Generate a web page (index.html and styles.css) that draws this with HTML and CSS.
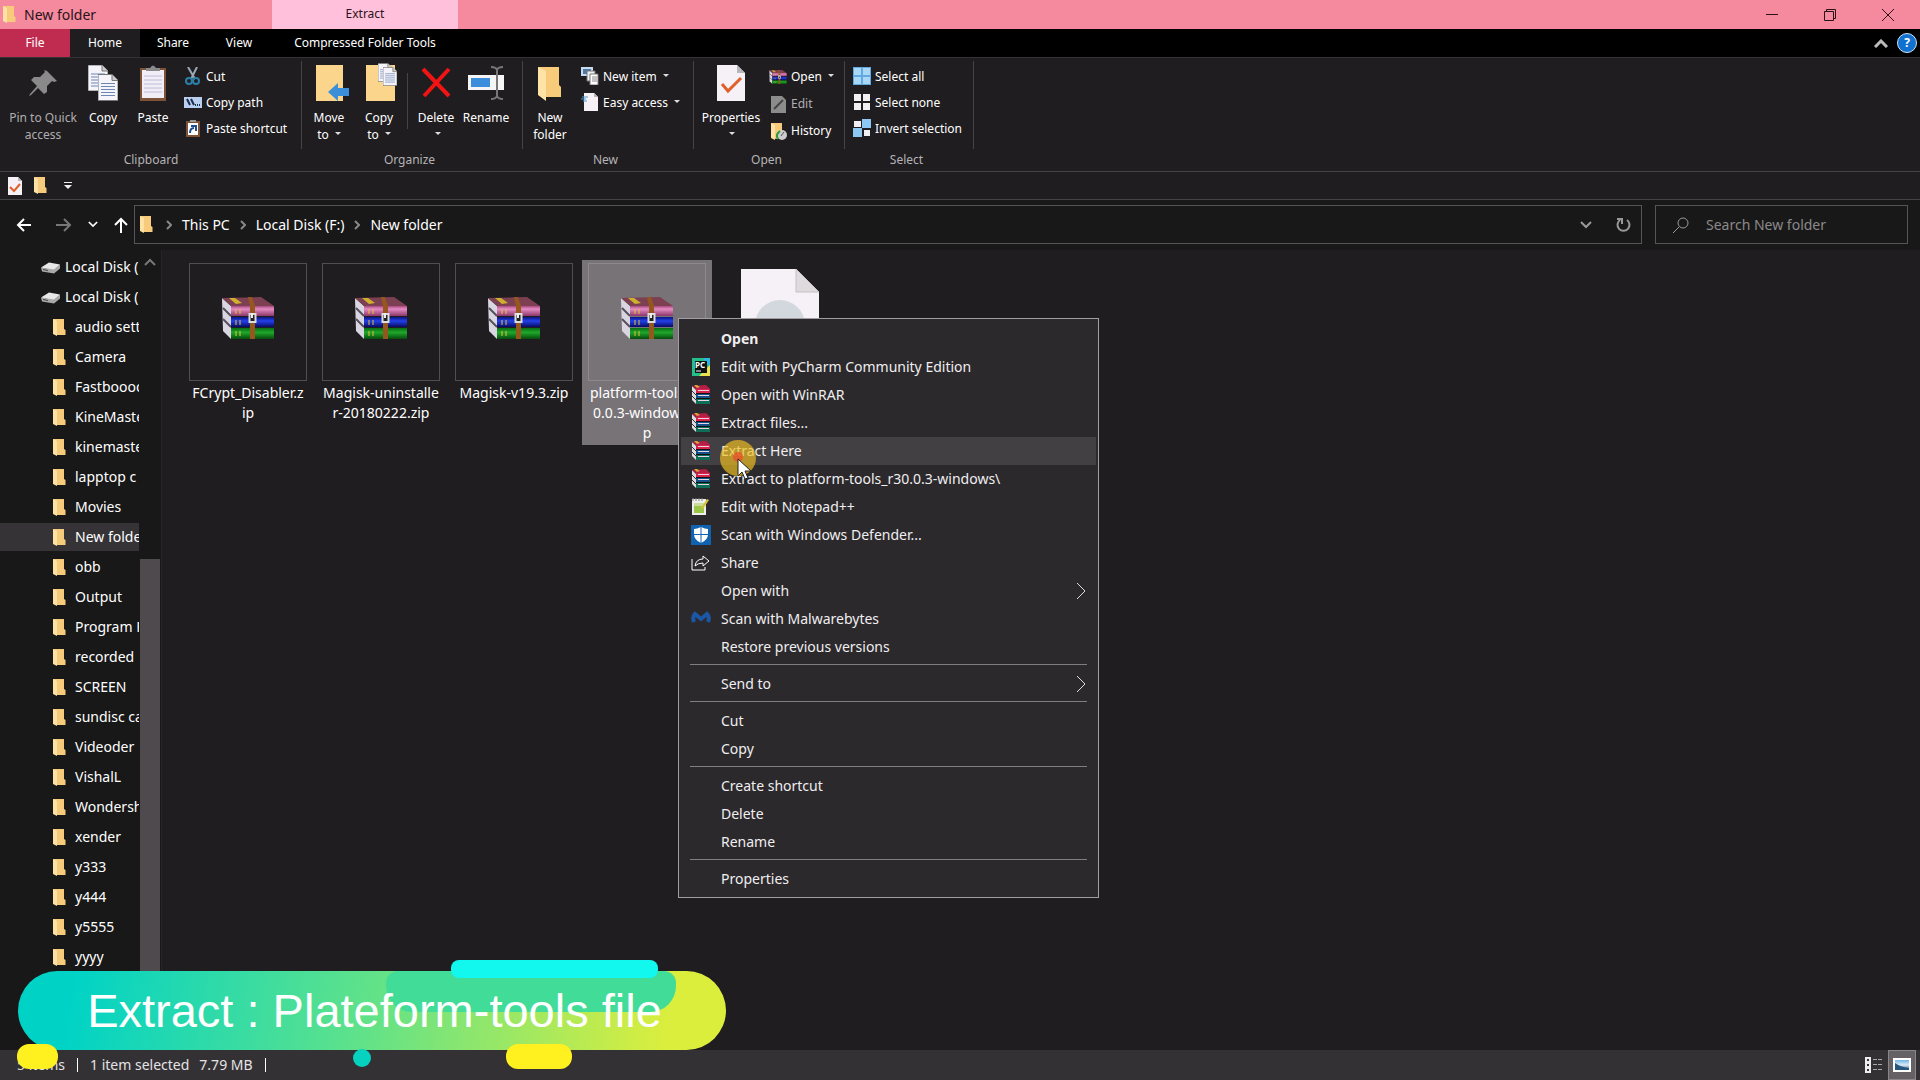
FILE: index.html
```html
<!DOCTYPE html>
<html lang="en">
	<head>
		<meta charset="UTF-8" />
		<title>New folder</title>
		<link rel="stylesheet" href="styles.css">
	</head>
	<body>
		<!-- shared icons -->
		<svg class="defs" aria-hidden="true">
			<defs>
				<linearGradient id="pink" x2="0" y2="1"><stop offset="0" stop-color="#a8487f" /><stop offset=".3" stop-color="#e58cc4" /><stop offset="1" stop-color="#8c3768" /></linearGradient>
				<linearGradient id="blue" x2="0" y2="1"><stop offset="0" stop-color="#0a1580" /><stop offset=".4" stop-color="#2440ea" /><stop offset="1" stop-color="#060c60" /></linearGradient>
				<linearGradient id="green" x2="0" y2="1"><stop offset="0" stop-color="#0a6b14" /><stop offset=".4" stop-color="#1fa82a" /><stop offset="1" stop-color="#064a0c" /></linearGradient>
				<linearGradient id="sky" x2="0" y2="1"><stop offset="0" stop-color="#6db5ea" /><stop offset=".5" stop-color="#dcecf4" /><stop offset="1" stop-color="#26567c" /></linearGradient>
			</defs>
			<symbol id="folder" viewBox="0 0 13 17">
				<path d="M0 0h11v10l1.500 1v5H3z" fill="#f6cb7c" />
				<path d="M0 0l4 2v15L0 15z" fill="#ffe2a3" />
			</symbol>
			<symbol id="drive" viewBox="0 0 19 12">
				<path d="M0 6L8 1l11 2-6 6z" fill="#e8e8e8" />
				<path d="M0 6l13 2v4L1 10zM13 8l6-5v4l-6 5z" fill="#a9a9a9" />
				<path d="M2 8l5 1" stroke="#444" />
			</symbol>
			<symbol id="books" viewBox="0 0 52 42">
				<path d="M0 1l9 8v33l-8-8z" fill="#d9d6e2" />
				<path d="M1 11l8 8M1 22l8 8" stroke="#55505c" stroke-width="2" />
				<path d="M0 1L39 0l13 9H9z" fill="#7d4053" />
				<path d="M7 1l7 6 6-1-7-5z" fill="#cfb02e" />
				<path d="M9 9h43v10H9z" fill="url(#pink)" />
				<path d="M9 20h43v10H9z" fill="url(#blue)" />
				<path d="M9 31h43v11H9z" fill="url(#green)" />
				<path d="M14 12v5M18 12v5M14 23v5M18 23v5M14 34v5M18 34v5" stroke="#e6c23a" />
				<path d="M26 0h4l3 9v33h-5V9z" fill="#96571f" />
				<path d="M27.500 17h6v8h-6z" fill="#222" stroke="#ddd" stroke-width="2" />
				<path d="M30 16v5" stroke="#eee" stroke-width="2" />
			</symbol>
			<symbol id="rar" viewBox="0 0 20 20">
				<path d="M1 1l4 4v14l-4-4z" fill="#ddd" />
				<path d="M1 6l4 4M1 11l4 4" stroke="#333" />
				<path d="M1 1L15 0l4 4H5z" fill="#b51e45" />
				<path d="M3 0l3 3 3-1-3-2z" fill="#d8a53a" />
				<path d="M5 4h14v4H5z" fill="#d8234f" />
				<path d="M5 9h14v4H5z" fill="#17518a" />
				<path d="M5 14h14v5H5z" fill="#0e6e58" />
				<path d="M7 5.500h11M7 10.500h11M7 15.500h11" stroke="#e9d5df" />
				<path d="M5 8.500h14M5 13.500h14" stroke="#111" />
			</symbol>
			<symbol id="page" viewBox="0 0 28 36">
				<path d="M0 0h20l8 8v28H0z" fill="#f5f1f7" />
				<path d="M20 0v8h8z" fill="#b9b5bd" />
			</symbol>
			<symbol id="lines" viewBox="0 0 20 26">
				<path d="M0 0h14l6 6v20H0z" fill="#f4f4fa" stroke="#777" />
				<path d="M14 0v6h6" fill="#ccc" stroke="#777" />
				<path d="M3 9h14M3 12h14M3 15h14M3 18h14M3 21h14" stroke="#6d87b5" />
			</symbol>
			<symbol id="chevron" viewBox="0 0 6 10">
				<path d="M1 1l4 4-4 4" fill="none" stroke="currentColor" stroke-width="2" />
			</symbol>
			<symbol id="down" viewBox="0 0 12 8">
				<path d="M1 1l5 5 5-5" fill="none" stroke="currentColor" stroke-width="2" />
			</symbol>
			<symbol id="submenu" viewBox="0 0 10 18">
				<path d="M1 1l8 8-8 8" fill="none" stroke="#ddd" />
			</symbol>
		</svg>

		<div class="window">
			<header class="titlebar">
				<div class="title">
					<svg class="folder-icon"><use href="#folder" /></svg>
					<span>New folder</span>
				</div>
				<div class="context-tab">Extract</div>
				<div class="window-buttons">
					<button aria-label="Minimize"><svg width="12" height="12"><path d="M0 5.500h12" stroke="#2b1218" /></svg></button>
					<button aria-label="Restore"><svg width="12" height="12"><path d="M.5 2.500h9v9h-9zM2.500 2V.5h9v9H10" fill="none" stroke="#2b1218" /></svg></button>
					<button aria-label="Close"><svg width="12" height="12"><path d="M0 0l12 12M12 0L0 12" stroke="#2b1218" /></svg></button>
				</div>
			</header>

			<nav class="tabs">
				<button class="tab file">File</button>
				<button class="tab active">Home</button>
				<button class="tab">Share</button>
				<button class="tab">View</button>
				<button class="tab tools">Compressed Folder Tools</button>
				<div class="tabs-right">
					<svg width="14" height="9"><path d="M1 8l6-6 6 6" fill="none" stroke="#bbb" stroke-width="3" /></svg>
					<button class="help" aria-label="Help">?</button>
				</div>
			</nav>

			<section class="ribbon">
				<div class="group clipboard">
					<div class="tools-row">
						<button class="big wide muted">
							<svg width="36" height="38" viewBox="0 0 36 38"><path d="M22 8l10 10-3 1-2-1-5 5v6l-3 2-6-6-7 7-2 1 1-2 7-8-6-6 3-3h6l5-5-1-2z" fill="#8a8a8a" /></svg>
							<span>Pin to Quick<br>access</span>
						</button>
						<button class="big">
							<svg width="36" height="38"><use href="#lines" x="3" y="2" width="20" height="26" /><use href="#lines" x="13" y="11" width="20" height="27" /></svg>
							<span>Copy</span>
						</button>
						<button class="big">
							<svg width="36" height="38"><path d="M5 5h26v33H5z" fill="#7d5338" /><path d="M7 7h22v28H7z" fill="#f1eef8" /><path d="M11 8V5h4q3-5 6 0h4v3z" fill="#8a8a8a" /><path d="M9 13h18M9 17h18M9 21h18M9 25h18M9 29h18" stroke="#bcbcd6" /></svg>
							<span>Paste</span>
						</button>
						<div class="smalls">
							<button class="small">
								<svg width="18" height="18"><path d="M4 0l7 12M13 0L7 12" stroke="#9aa7b5" stroke-width="2" /><circle cx="5" cy="14" r="3" fill="none" stroke="#2b7fa8" stroke-width="2" /><circle cx="12" cy="14" r="3" fill="none" stroke="#2b7fa8" stroke-width="2" /></svg>
								<span>Cut</span>
							</button>
							<button class="small">
								<svg width="18" height="18"><path d="M0 4h18v11H0z" fill="#b9cff0" /><path d="M3 6l3 6M7 6l3 6" stroke="#1b2b4a" stroke-width="2" /><path d="M11 12h1M13 12h1M15 12h1" stroke="#1b2b4a" stroke-width="2" /></svg>
								<span>Copy path</span>
							</button>
							<button class="small">
								<svg width="18" height="18"><path d="M2 2h14v16H2z" fill="#7d5338" /><path d="M4 4h10v12H4z" fill="#fff" /><path d="M6 3V1h6v2z" fill="#999" /><path d="M6 14q0-5 4-5M7 7h5v5" fill="none" stroke="#1f4d8f" stroke-width="2" /></svg>
								<span>Paste shortcut</span>
							</button>
						</div>
					</div>
					<div class="group-name">Clipboard</div>
				</div>

				<div class="group organize">
					<div class="tools-row">
						<button class="big">
							<svg width="36" height="38"><path d="M5 2h27v36H5z" fill="#fbd58c" /><path d="M17 29l10-9v5h11v8H27v5z" fill="#3b8ed8" /></svg>
							<span>Move<br>to <i class="caret"></i></span>
						</button>
						<button class="big">
							<svg width="36" height="38"><path d="M5 2h29v36H5z" fill="#fbd58c" /><use href="#lines" x="17" y="0" width="14" height="19" /><use href="#lines" x="22" y="4" width="14" height="19" /></svg>
							<span>Copy<br>to <i class="caret"></i></span>
						</button>
						<div class="split"></div>
						<button class="big">
							<svg width="36" height="38"><path d="M5 6l26 27M31 6L6 33" stroke="#f01414" stroke-width="4" /></svg>
							<span>Delete<br><i class="caret"></i></span>
						</button>
						<button class="big">
							<svg width="36" height="38"><path d="M0 12h36v15H0z" fill="#f5f5f5" /><path d="M3 15h19v9H3z" fill="#3a8edb" /><path d="M23 4q5 0 6 3 1-3 6-3M23 36q5 0 6-3 1 3 6 3M29 6v28" fill="none" stroke="#777" stroke-width="2" /></svg>
							<span>Rename</span>
						</button>
					</div>
					<div class="group-name">Organize</div>
				</div>

				<div class="group new">
					<div class="tools-row">
						<button class="big">
							<svg width="36" height="38"><path d="M6 4h21v18l2 2v10H14z" fill="#f8cb7a" /><path d="M6 4l8 4v30l-8-6z" fill="#ffe3a6" /></svg>
							<span>New<br>folder</span>
						</button>
						<div class="smalls">
							<button class="small">
								<svg width="18" height="18"><path d="M0 0h12v9H0z" fill="#c8dbef" /><path d="M2 2h8v5H2z" fill="#4d7aa8" /><path d="M6 4h8v10H6z" fill="#eee" stroke="#777" /><path d="M9 7h8v11H9z" fill="#fff" stroke="#777" /><path d="M11 10h5M11 12h5M11 14h5" stroke="#888" /></svg>
								<span>New item <i class="caret"></i></span>
							</button>
							<button class="small">
								<svg width="18" height="18"><use href="#page" x="3" y="0" width="14" height="18" /><path d="M1 4h6M0 6h5M2 8h4" stroke="#4aa0d8" /></svg>
								<span>Easy access <i class="caret"></i></span>
							</button>
						</div>
					</div>
					<div class="group-name">New</div>
				</div>

				<div class="group open">
					<div class="tools-row">
						<button class="big wide">
							<svg width="36" height="38"><use href="#page" x="4" y="2" width="28" height="36" /><path d="M9 21l6 7 13-13" fill="none" stroke="#e0602b" stroke-width="3" /></svg>
							<span>Properties<br><i class="caret"></i></span>
						</button>
						<div class="smalls">
							<button class="small">
								<svg width="18" height="18"><use href="#books" x="0" y="2" width="18" height="14" /></svg>
								<span>Open <i class="caret"></i></span>
							</button>
							<button class="small muted">
								<svg width="18" height="18"><path d="M2 1h11l4 4v13H2z" fill="#8c8c8c" /><path d="M5 14l9-9" stroke="#444" stroke-width="2" /></svg>
								<span>Edit</span>
							</button>
							<button class="small">
								<svg width="18" height="18"><path d="M2 1h11v14l-6 2-5-2z" fill="#f6cb7c" /><path d="M2 1l4 2v15l-4-2z" fill="#ffe2a3" /><circle cx="13" cy="13" r="5" fill="#ccc" /><path d="M9 17q-3-4 2-8" stroke="#2e9a3c" stroke-width="2" fill="none" /><path d="M12 14l3-4" stroke="#555" /></svg>
								<span>History</span>
							</button>
						</div>
					</div>
					<div class="group-name">Open</div>
				</div>

				<div class="group select">
					<div class="tools-row">
						<div class="smalls">
							<button class="small">
								<svg width="18" height="18"><path d="M0 0h18v18H0z" fill="#62a9e2" /><path d="M1 1h7v7H1zM10 1h7v7h-7zM1 10h7v7H1zM10 10h7v7h-7z" fill="#a9d7f8" /></svg>
								<span>Select all</span>
							</button>
							<button class="small">
								<svg width="18" height="18"><path d="M1 1h7v7H1zM10 1h7v7h-7zM1 10h7v7H1zM10 10h7v7h-7z" fill="#f2eff2" /></svg>
								<span>Select none</span>
							</button>
							<button class="small">
								<svg width="18" height="18"><path d="M1 2h7v6H1zM11 11h6v6h-6z" fill="#f2eff2" /><path d="M9 0h9v9H9zM0 9h9v9H0z" fill="#8cc6f2" /></svg>
								<span>Invert selection</span>
							</button>
						</div>
					</div>
					<div class="group-name">Select</div>
				</div>
			</section>

			<div class="quick-access">
				<button aria-label="Properties"><svg width="14" height="18"><use href="#page" width="14" height="18" /><path d="M2 10l4 4 6-7" fill="none" stroke="#e0602b" stroke-width="2" /></svg></button>
				<button aria-label="New folder"><svg class="folder-icon"><use href="#folder" /></svg></button>
				<button class="customize" aria-label="Customize Quick Access Toolbar"><svg width="8" height="7"><path d="M0 .5h8" stroke="#eee" /><path d="M0 3h8L4 7z" fill="#eee" /></svg></button>
			</div>

			<div class="address-row">
				<div class="history">
					<button class="back" aria-label="Back"><svg width="16" height="14"><path d="M15 7H2M8 1L2 7l6 6" fill="none" stroke="#fff" stroke-width="2" /></svg></button>
					<button aria-label="Forward"><svg width="16" height="14"><path d="M0 7h14M8 1l6 6-6 6" fill="none" stroke="#777" stroke-width="2" /></svg></button>
					<button aria-label="Recent locations"><svg width="10" height="7"><use href="#down" width="10" height="7" /></svg></button>
					<button aria-label="Up"><svg width="14" height="16"><path d="M7 16V2M1 8l6-6 6 6" fill="none" stroke="#fff" stroke-width="2" /></svg></button>
				</div>
				<div class="address">
					<svg class="folder-icon"><use href="#folder" /></svg>
					<svg class="crumb-arrow"><use href="#chevron" /></svg>
					<a href="#">This PC</a>
					<svg class="crumb-arrow"><use href="#chevron" /></svg>
					<a href="#">Local Disk (F:)</a>
					<svg class="crumb-arrow"><use href="#chevron" /></svg>
					<a href="#">New folder</a>
					<div class="address-tools">
						<button aria-label="Previous locations"><svg width="12" height="8"><use href="#down" /></svg></button>
						<button aria-label="Refresh"><svg width="16" height="16"><path d="M11 3a6 6 0 1 1-7 0M1 2h5v5" fill="none" stroke="#999" stroke-width="2" /></svg></button>
					</div>
				</div>
				<label class="search">
					<svg width="16" height="16"><circle cx="10" cy="6" r="5" fill="none" stroke="#999" /><path d="M6 10l-6 6" stroke="#999" /></svg>
					<input type="text" placeholder="Search New folder" aria-label="Search New folder">
				</label>
			</div>

			<main class="main">
				<aside class="sidebar">
					<ul class="tree">
						<li class="disk"><svg><use href="#drive" /></svg>Local Disk (E:)</li>
						<li class="disk"><svg><use href="#drive" /></svg>Local Disk (F:)</li>
						<li><svg><use href="#folder" /></svg>audio settings</li>
						<li><svg><use href="#folder" /></svg>Camera</li>
						<li><svg><use href="#folder" /></svg>Fastboooot</li>
						<li><svg><use href="#folder" /></svg>KineMaster</li>
						<li><svg><use href="#folder" /></svg>kinemaster</li>
						<li><svg><use href="#folder" /></svg>lapptop c</li>
						<li><svg><use href="#folder" /></svg>Movies</li>
						<li class="current"><svg><use href="#folder" /></svg>New folder</li>
						<li><svg><use href="#folder" /></svg>obb</li>
						<li><svg><use href="#folder" /></svg>Output</li>
						<li><svg><use href="#folder" /></svg>Program Files</li>
						<li><svg><use href="#folder" /></svg>recorded</li>
						<li><svg><use href="#folder" /></svg>SCREEN</li>
						<li><svg><use href="#folder" /></svg>sundisc card</li>
						<li><svg><use href="#folder" /></svg>Videoder</li>
						<li><svg><use href="#folder" /></svg>VishalL</li>
						<li><svg><use href="#folder" /></svg>Wondershare</li>
						<li><svg><use href="#folder" /></svg>xender</li>
						<li><svg><use href="#folder" /></svg>y333</li>
						<li><svg><use href="#folder" /></svg>y444</li>
						<li><svg><use href="#folder" /></svg>y5555</li>
						<li><svg><use href="#folder" /></svg>yyyy</li>
					</ul>
					<div class="scrollbar">
						<svg width="12" height="8"><path d="M1 7l5-5 5 5" fill="none" stroke="#777" stroke-width="2" /></svg>
						<div class="thumb"></div>
					</div>
				</aside>

				<section class="files">
					<button class="item">
						<span class="preview"><svg width="52" height="42"><use href="#books" /></svg></span>
						<span class="name">FCrypt_Disabler.z<br>ip</span>
					</button>
					<button class="item">
						<span class="preview"><svg width="52" height="42"><use href="#books" /></svg></span>
						<span class="name">Magisk-uninstalle<br>r-20180222.zip</span>
					</button>
					<button class="item">
						<span class="preview"><svg width="52" height="42"><use href="#books" /></svg></span>
						<span class="name">Magisk-v19.3.zip</span>
					</button>
					<button class="item selected">
						<span class="preview"><svg width="52" height="42"><use href="#books" /></svg></span>
						<span class="name">platform-tools_r3<br>0.0.3-windows.zi<br>p</span>
					</button>
					<button class="item" aria-label="Disc image">
						<span class="preview plain"><svg width="78" height="106"><path d="M0 0h55l23 23v83H0z" fill="#f6f1f6" /><path d="M55 0v23h23z" fill="#dedade" stroke="#c4c0c4" /><circle cx="39" cy="56" r="25" fill="#d3d8de" /></svg></span>
					</button>
				</section>
			</main>

			<footer class="status">
				<span>5 items</span>
				<i class="bar"></i>
				<span>1 item selected</span>
				<span>7.79 MB</span>
				<i class="bar"></i>
				<div class="views">
					<button aria-label="Details"><svg width="18" height="16"><path d="M0 0h6v16H0z" fill="#eee" /><path d="M2 2h2v2H2zM2 7h2v2H2zM2 12h2v2H2z" fill="#333" /><path d="M8 2.500h10M8 7.500h10M8 12.500h10" stroke="#aaa" stroke-dasharray="4 1" /></svg></button>
					<button class="on" aria-label="Large icons"><svg width="18" height="14"><path d="M0 0h18v14H0z" fill="#fff" /><path d="M2 2h14v10H2z" fill="url(#sky)" /><path d="M2 5q5 4 14 5v2H2z" fill="#26567c" /></svg></button>
				</div>
			</footer>
		</div>

		<!-- right-click menu -->
		<div class="menu" role="menu">
			<button class="default"><span class="icon"></span>Open</button>
			<button><svg class="icon" viewBox="0 0 20 20"><path d="M1 1h18v18H1z" fill="#21c08a" /><path d="M12 1h7v9z" fill="#2cb7e8" /><path d="M19 8v11H8z" fill="#e8e34e" /><path d="M4 4h12v12H4z" fill="#111" /><text x="4" y="11" class="pc">PC</text><path d="M5 14h5" stroke="#fff" /></svg>Edit with PyCharm Community Edition</button>
			<button><svg class="icon"><use href="#rar" /></svg>Open with WinRAR</button>
			<button><svg class="icon"><use href="#rar" /></svg>Extract files...</button>
			<button class="hover"><svg class="icon"><use href="#rar" /></svg>Extract Here</button>
			<button><svg class="icon"><use href="#rar" /></svg>Extract to platform-tools_r30.0.3-windows\</button>
			<button><svg class="icon" viewBox="0 0 20 20"><path d="M1 2h14v16H1z" fill="#eeeeea" /><path d="M2 1v3M5 1v3M8 1v3M11 1v3" stroke="#888" /><path d="M3 8h10v8H3z" fill="#9cc64a" /><path d="M3 6h10v3H3z" fill="#c9dd9a" /><path d="M10 11l6-9 2 1-6 9z" fill="#d8bd3e" /></svg>Edit with Notepad++</button>
			<button><svg class="icon" viewBox="0 0 20 20"><path d="M0 0h20v20H0z" fill="#0f63b0" /><path d="M10 2q4 2 7 2v5q0 6-7 9-7-3-7-9V4q3 0 7-2z" fill="#fff" /><path d="M10 2v16M3 9.500h14" stroke="#0f63b0" /></svg>Scan with Windows Defender...</button>
			<button><svg class="icon" viewBox="0 0 20 20"><path d="M1 6v11h13v-3M4 13q1-7 8-7V3l6 5-6 5v-3q-5 0-8 3z" fill="none" stroke="#fff" /></svg>Share</button>
			<button><span class="icon"></span>Open with<svg class="arrow"><use href="#submenu" /></svg></button>
			<button><svg class="icon" viewBox="0 0 20 20"><path d="M3 13Q1 8 4 5l6 5 6-5q3 3 1 8" fill="none" stroke="#1c57a5" stroke-width="4" /></svg>Scan with Malwarebytes</button>
			<button><span class="icon"></span>Restore previous versions</button>
			<hr>
			<button><span class="icon"></span>Send to<svg class="arrow"><use href="#submenu" /></svg></button>
			<hr>
			<button><span class="icon"></span>Cut</button>
			<button><span class="icon"></span>Copy</button>
			<hr>
			<button><span class="icon"></span>Create shortcut</button>
			<button><span class="icon"></span>Delete</button>
			<button><span class="icon"></span>Rename</button>
			<hr>
			<button><span class="icon"></span>Properties</button>
		</div>

		<!-- click highlight and pointer -->
		<div class="pointer">
			<svg width="36" height="42">
				<circle cx="18" cy="18" r="18" fill="#f0c020" opacity=".68" />
				<circle cx="18" cy="17" r="5" fill="#e8502a" opacity=".8" />
				<path d="M18 19v17l4-4 3 7 3-1-3-7h6z" fill="#fff" stroke="#222" />
			</svg>
		</div>

		<!-- caption over the bottom left corner -->
		<div class="caption">
			<div class="shade"></div>
			<div class="blob cyan"></div>
			<div class="blob yellow-left"></div>
			<div class="blob dot"></div>
			<div class="blob yellow-right"></div>
			<span>Extract : Plateform-tools file</span>
		</div>
	</body>
</html>
```
FILE: styles.css
```css
* {
	box-sizing: border-box;
}
body {
	margin: 0;
	background: #1f1d20;
	color: #fff;
	font-family: "Noto Sans", "Open Sans", sans-serif;
	font-size: 14px;
	line-height: 20px;
	overflow: hidden;
}
button {
	margin: 0;
	padding: 0;
	border: 0;
	background: none;
	color: inherit;
	font: inherit;
}
a {
	color: inherit;
	text-decoration: none;
}
svg {
	display: block;
	flex: none;
}
.defs {
	position: absolute;
	width: 0;
	height: 0;
}
.window {
	display: flex;
	flex-direction: column;
	height: 100vh;
}
.folder-icon {
	width: 13px;
	height: 17px;
}

/* title bar */
.titlebar {
	display: flex;
	height: 29px;
	background: #f58a9f;
	color: #2b1218;
}
.title {
	display: flex;
	align-items: center;
	gap: 8px;
	width: 272px;
	padding-left: 3px;
}
.context-tab {
	width: 186px;
	background: #ffc0dc;
	font-size: 12px;
	line-height: 28px;
	text-align: center;
}
.window-buttons {
	display: flex;
	margin-left: auto;
	padding-right: 3px;
}
.window-buttons button {
	display: flex;
	align-items: center;
	justify-content: center;
	width: 58px;
}

/* tabs */
.tabs {
	display: flex;
	height: 28px;
	background: #000;
	font-size: 12px;
}
.tab {
	width: 66px;
}
.tab.file {
	width: 70px;
	background: #c02c50;
}
.tab.active {
	width: 70px;
	background: #1f1d20;
}
.tab.tools {
	width: 186px;
}
.tabs-right {
	display: flex;
	align-items: center;
	gap: 9px;
	margin-left: auto;
	padding-right: 3px;
}
.help {
	width: 20px;
	height: 20px;
	border: 1px solid #cfe3f7;
	border-radius: 50%;
	background: #1270cf;
	font-weight: bold;
	line-height: 18px;
}

/* ribbon */
.ribbon {
	display: flex;
	height: 115px;
	border-top: 1px solid #343234;
	border-bottom: 1px solid #454345;
	font-size: 12px;
	line-height: 17px;
}
.group {
	display: flex;
	flex-direction: column;
	padding: 5px 2px 0;
	background: linear-gradient(#454345, #454345) no-repeat right 3px / 1px 88px;
}
.clipboard {
	width: 302px;
	padding-left: 8px;
}
.organize {
	width: 221px;
}
.new {
	width: 171px;
}
.open {
	width: 151px;
}
.select {
	width: 129px;
}
.tools-row {
	display: flex;
	height: 88px;
}
.group-name {
	margin-right: 6px;
	color: #b5b3b5;
	text-align: center;
}
.big {
	display: flex;
	flex-direction: column;
	align-items: center;
	gap: 8px;
	width: 50px;
	white-space: nowrap;
}
.big.wide {
	width: 70px;
}
.big svg {
	overflow: visible;
}
.muted {
	color: #b0aeb0;
}
.split {
	width: 1px;
	height: 56px;
	margin: 10px 3px 0;
	background: #454345;
}
.smalls {
	display: flex;
	flex-direction: column;
	padding: 0 6px;
}
.small {
	display: flex;
	align-items: center;
	gap: 4px;
	height: 26px;
	white-space: nowrap;
}
.open .smalls {
	padding: 0 3px;
}
.open .small {
	height: 27px;
}
.caret {
	display: inline-block;
	margin-left: 3px;
	border: 3px solid transparent;
	border-top-color: #ddd;
	border-bottom: 0;
	vertical-align: 4px;
}

/* quick access + address */
.quick-access {
	display: flex;
	align-items: center;
	gap: 12px;
	height: 28px;
	padding-left: 8px;
	border-bottom: 1px solid #454345;
}
.customize {
	padding-left: 5px;
}
.address-row {
	display: flex;
	height: 50px;
	padding: 5px 12px 6px 16px;
	background: #181818;
}
.history {
	display: flex;
	align-items: center;
	gap: 16px;
	width: 118px;
}
.back {
	padding-right: 8px;
}
.address {
	display: flex;
	flex: 1;
	align-items: center;
	margin-right: 13px;
	padding: 0 9px 0 5px;
	border: 1px solid #565456;
}
.crumb-arrow {
	width: 6px;
	height: 10px;
	margin: 0 10px;
	color: #888;
}
.address .folder-icon {
	margin-right: 3px;
}
.address-tools {
	display: flex;
	align-items: center;
	gap: 24px;
	margin-left: auto;
	color: #999;
}
.search {
	display: flex;
	align-items: center;
	gap: 17px;
	width: 253px;
	padding-left: 17px;
	border: 1px solid #565456;
}
.search input {
	width: 180px;
	padding: 0;
	border: 0;
	outline: 0;
	background: none;
	color: #fff;
	font: inherit;
}
.search input::placeholder {
	color: #8b898b;
	opacity: 1;
}

/* navigation pane */
.main {
	display: flex;
	flex: 1;
	min-height: 0;
}
.sidebar {
	display: flex;
	width: 162px;
	background: #181818;
	border-right: 1px solid #262426;
}
.tree {
	width: 139px;
	margin: 0;
	padding: 3px 0 0;
	overflow: hidden;
	list-style: none;
}
.tree li {
	display: flex;
	align-items: center;
	gap: 9px;
	height: 28px;
	margin-bottom: 2px;
	padding-left: 53px;
	white-space: nowrap;
}
.tree .disk {
	gap: 5px;
	padding-left: 41px;
}
.tree svg {
	width: 13px;
	height: 17px;
}
.tree .disk svg {
	width: 19px;
}
.tree .current {
	background: #363337;
}
.scrollbar {
	display: flex;
	flex-direction: column;
	align-items: center;
	width: 20px;
	margin-left: 1px;
	padding-top: 8px;
}
.thumb {
	width: 20px;
	flex: 1;
	margin-top: 293px;
	background: #4e4a4e;
}

/* files */
.files {
	display: flex;
	flex: 1;
	align-items: flex-start;
	gap: 3px;
	padding: 10px 21px;
}
.item {
	display: flex;
	flex-direction: column;
	align-items: center;
	width: 130px;
	padding: 3px 0 2px;
}
.item.selected {
	background: #787377;
}
.preview {
	display: flex;
	align-items: center;
	justify-content: center;
	width: 118px;
	height: 118px;
	padding-bottom: 8px;
	border: 1px solid #504e50;
}
.preview.plain {
	padding: 0;
	border: 0;
}
.selected .preview {
	border-color: #8d898c;
}
.name {
	margin-top: 2px;
	white-space: nowrap;
}

/* status bar */
.status {
	display: flex;
	align-items: center;
	gap: 10px;
	height: 30px;
	padding: 0 4px 0 17px;
	background: #343135;
	color: #e4e2e4;
}
.bar {
	width: 1px;
	height: 14px;
	margin: 0 2px;
	background: #fff;
}
.views {
	display: flex;
	align-self: stretch;
	margin-left: auto;
}
.views button {
	display: flex;
	align-items: center;
	justify-content: center;
	width: 28px;
}
.views .on {
	border: 1px solid #8a878a;
	background: #656165;
}

/* context menu */
.menu {
	position: absolute;
	left: 678px;
	top: 318px;
	width: 421px;
	padding: 6px 2px 4px;
	border: 1px solid #a09ea0;
	background: #2b292c;
	color: #f0eef0;
}
.menu button {
	display: flex;
	align-items: center;
	width: 100%;
	height: 28px;
	padding: 0 10px;
	text-align: left;
}
.menu .default {
	font-weight: bold;
}
.menu .hover {
	background: #434043;
}
.menu .icon {
	width: 20px;
	height: 20px;
	margin-right: 10px;
}
.menu .arrow {
	width: 10px;
	height: 18px;
	margin-left: auto;
}
.menu hr {
	height: 1px;
	margin: 3px 9px 5px;
	border: 0;
	background: #807e80;
}
.pc {
	fill: #fff;
	font-size: 8px;
	font-weight: bold;
}
.pointer {
	position: absolute;
	left: 720px;
	top: 440px;
}

/* caption */
.caption {
	position: absolute;
	left: 18px;
	bottom: 30px;
	width: 708px;
	height: 79px;
	padding-left: 5px;
	border-radius: 40px;
	background: linear-gradient(100deg, #00d3c6 8%, #62e288 50%, #dcee3c 92%);
	font-family: "Liberation Sans", Arial, sans-serif;
	font-size: 47px;
	line-height: 79px;
	text-align: center;
}
.caption span {
	position: relative;
}
.shade,
.blob {
	position: absolute;
}
.shade {
	left: 368px;
	top: 0;
	width: 290px;
	height: 41px;
	border-radius: 12px 12px 26px 26px;
	background: #42dc99;
}
.blob {
	border-radius: 12px;
	background: #fff01f;
}
.blob.cyan {
	left: 433px;
	top: -11px;
	width: 207px;
	height: 18px;
	border-radius: 8px;
	background: #12f7ee;
}
.blob.yellow-left {
	left: -1px;
	top: 73px;
	width: 41px;
	height: 25px;
}
.blob.dot {
	left: 335px;
	top: 78px;
	width: 18px;
	height: 18px;
	background: #05d2bf;
}
.blob.yellow-right {
	left: 488px;
	top: 73px;
	width: 66px;
	height: 25px;
}
```
